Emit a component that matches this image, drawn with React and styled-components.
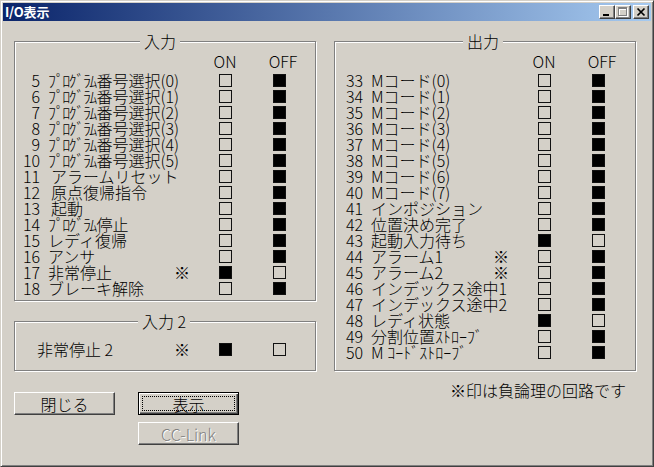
import React from 'react';
import styled, { createGlobalStyle } from 'styled-components';

const FONT = `"Noto Sans CJK JP", "Noto Sans", sans-serif`;

const Global = createGlobalStyle`
  html, body { margin: 0; padding: 0; background: #D4D0C8; }
  body { font-family: ${FONT}; }
`;

const Window = styled.div`
  width: 654px;
  height: 467px;
  box-sizing: border-box;
  background: #D4D0C8;
  border: 1px solid;
  border-color: #D4D0C8 #404040 #404040 #D4D0C8;
  box-shadow: inset 1px 1px #fff, inset -1px -1px #808080;
  padding: 2px;
  display: flex;
  flex-direction: column;
  font-family: ${FONT};
  font-size: 16px;
  font-weight: 300;
  line-height: 16px;
  color: #000;
`;

const TitleBar = styled.div`
  height: 18px;
  flex: none;
  display: flex;
  align-items: center;
  justify-content: space-between;
  background: linear-gradient(to right, #0A246A, #A6CAF0);
  padding: 0 2px 0 2px;
`;

const TitleText = styled.span`
  color: #fff;
  font-weight: bold;
  font-size: 13px;
  line-height: 18px;
  letter-spacing: -0.2px;
`;

const CapButtons = styled.div`
  display: flex;
  align-items: center;
`;

const CapButton = styled.div`
  width: 16px;
  height: 14px;
  box-sizing: border-box;
  background: #D4D0C8;
  border: 1px solid;
  border-color: #fff #404040 #404040 #fff;
  box-shadow: inset -1px -1px #808080;
  margin-left: ${p => p.$gap || 0}px;
  svg { display: block; }
`;

const Body = styled.div`
  display: grid;
  grid-template-columns: 302px 302px;
  column-gap: 18px;
  padding: 20px 0 0 11px;
`;

const Column = styled.div`
  display: flex;
  flex-direction: column;
`;

const Group = styled.div`
  position: relative;
  box-sizing: border-box;
  height: ${p => p.$h}px;
  margin-top: ${p => p.$mt || 0}px;
  border: 1px solid #808080;
  box-shadow: inset 1px 1px #fff, 1px 1px #fff;
  padding-top: ${p => p.$pt}px;
  padding-left: ${p => p.$pl || 0}px;
`;

const Legend = styled.span`
  position: absolute;
  top: -9px;
  left: 50%;
  transform: translateX(calc(-50% + ${p => p.$shift || 0}px));
  background: #D4D0C8;
  padding: 0 4px;
  line-height: 16px;
  white-space: nowrap;
`;

const Row = styled.div`
  display: grid;
  grid-template-columns: 154px 24px 18px 26px 28px 26px;
  height: 16px;
  align-items: center;
  margin-bottom: ${p => p.$mb || 0}px;
`;

const Label = styled.div`
  grid-column: 1;
  display: flex;
  white-space: pre;
  min-width: 0;
  overflow: visible;
  padding-left: ${p => p.$pl || 0}px;
`;

const Num = styled.span`
  flex: none;
  width: ${p => p.$w}px;
  text-align: right;
`;

const Text = styled.span`
  margin-left: ${p => p.$gap}px;
`;

const Narrow = styled.span`
  letter-spacing: -1.7px;
  margin-right: 1px;
`;

const Mark = styled.span`
  grid-column: 2;
  justify-self: center;
`;

const HeadText = styled.span`
  grid-column: ${p => p.$col};
  justify-self: center;
  white-space: nowrap;
  margin-left: ${p => p.$ml || 0}px;
`;

const Lamp = styled.span`
  grid-column: ${p => p.$col};
  justify-self: center;
  width: 13px;
  height: 13px;
  box-sizing: border-box;
  border: 1px solid #111;
  background: ${p => (p.$on ? '#000' : 'transparent')};
`;

const ButtonRow = styled.div`
  display: flex;
  gap: 23px;
  margin-top: 21px;
  align-items: flex-start;
`;

const ButtonStack = styled.div`
  display: flex;
  flex-direction: column;
  gap: 7px;
`;

const Button = styled.button`
  width: 101px;
  height: 23px;
  box-sizing: border-box;
  padding: 0;
  margin: 0;
  background: #D4D0C8;
  font-family: ${FONT};
  font-size: 16px;
  font-weight: 300;
  line-height: 16px;
  color: #000;
  border: 1px solid;
  border-color: #fff #404040 #404040 #fff;
  box-shadow: inset -1px -1px #808080;
  cursor: default;
`;

const DefaultButton = styled(Button)`
  border-color: #000;
  box-shadow: inset 1px 1px #fff, inset -1px -1px #404040, inset -2px -2px #808080;
  outline: 1px dotted #000;
  outline-offset: -5px;
`;

const DisabledButton = styled(Button)`
  color: #808080;
  text-shadow: 1px 1px #fff;
`;

const Note = styled.div`
  margin-top: 11px;
  padding-right: 10px;
  text-align: right;
  white-space: nowrap;
`;

const PG = 'ﾌﾟﾛｸﾞﾗﾑ';

const inputRows = [
  { n: '5', hw: PG, t: '番号選択(0)' },
  { n: '6', hw: PG, t: '番号選択(1)' },
  { n: '7', hw: PG, t: '番号選択(2)' },
  { n: '8', hw: PG, t: '番号選択(3)' },
  { n: '9', hw: PG, t: '番号選択(4)' },
  { n: '10', hw: PG, t: '番号選択(5)' },
  { n: '11', t: 'アラームリセット', extra: 3 },
  { n: '12', t: '原点復帰指令', extra: 3 },
  { n: '13', t: '起動', extra: 3 },
  { n: '14', hw: PG, t: '停止' },
  { n: '15', t: 'レディ復帰' },
  { n: '16', t: 'アンサ' },
  { n: '17', t: '非常停止', mark: true, on: true },
  { n: '18', t: 'ブレーキ解除' },
];

const outputRows = [
  { n: '33', t: 'Mコード(0)' },
  { n: '34', t: 'Mコード(1)' },
  { n: '35', t: 'Mコード(2)' },
  { n: '36', t: 'Mコード(3)' },
  { n: '37', t: 'Mコード(4)' },
  { n: '38', t: 'Mコード(5)' },
  { n: '39', t: 'Mコード(6)' },
  { n: '40', t: 'Mコード(7)' },
  { n: '41', t: 'インポジション' },
  { n: '42', t: '位置決め完了' },
  { n: '43', t: '起動入力待ち', on: true },
  { n: '44', t: 'アラーム1', mark: true },
  { n: '45', t: 'アラーム2', mark: true },
  { n: '46', t: 'インデックス途中1' },
  { n: '47', t: 'インデックス途中2' },
  { n: '48', t: 'レディ状態', on: true },
  { n: '49', t: '分割位置ｽﾄﾛｰﾌﾞ' },
  { n: '50', t: 'M ｺｰﾄﾞｽﾄﾛｰﾌﾞ' },
];

function IoRow({ row, numW, gap }) {
  return (
    <Row>
      <Label>
        <Num $w={numW}>{row.n}</Num>
        <Text $gap={gap + (row.extra || 0)}>
          {row.hw && <Narrow>{row.hw}</Narrow>}
          {row.t}
        </Text>
      </Label>
      {row.mark && <Mark>※</Mark>}
      <Lamp $col={4} $on={!!row.on} />
      <Lamp $col={6} $on={!row.on} />
    </Row>
  );
}

function Header() {
  return (
    <Row $mb={3}>
      <HeadText $col={4}>ON</HeadText>
      <HeadText $col={6} $ml={8}>OFF</HeadText>
    </Row>
  );
}

export default function App() {
  return (
    <>
      <Global />
      <Window>
        <TitleBar>
          <TitleText>I/O表示</TitleText>
          <CapButtons>
            <CapButton>
              <svg width="14" height="12" viewBox="0 0 14 12">
                <rect x="3" y="8" width="6" height="2" fill="#000" />
              </svg>
            </CapButton>
            <CapButton>
              <svg width="14" height="12" viewBox="0 0 14 12" shapeRendering="crispEdges">
                <g transform="translate(1 1)" fill="none" stroke="#fff">
                  <rect x="2.5" y="1.5" width="8" height="8" />
                  <line x1="2" y1="2.5" x2="11" y2="2.5" />
                </g>
                <g fill="none" stroke="#808080">
                  <rect x="2.5" y="1.5" width="8" height="8" />
                  <line x1="2" y1="2.5" x2="11" y2="2.5" />
                </g>
              </svg>
            </CapButton>
            <CapButton $gap={2}>
              <svg width="14" height="12" viewBox="0 0 14 12">
                <path d="M3.5 2.5 L10.5 9.5 M10.5 2.5 L3.5 9.5" stroke="#000" strokeWidth="1.7" />
              </svg>
            </CapButton>
          </CapButtons>
        </TitleBar>
        <Body>
          <Column>
            <Group $h={260} $pt={11} $pl={1}>
              <Legend $shift={-5}>入力</Legend>
              <Header />
              {inputRows.map(r => (
                <IoRow key={r.n} row={r} numW={24} gap={8} />
              ))}
            </Group>
            <Group $h={50} $mt={20} $pt={19} $pl={1}>
              <Legend $shift={-1}>入力 2</Legend>
              <Row>
                <Label $pl={21}>非常停止 2</Label>
                <Mark>※</Mark>
                <Lamp $col={4} $on />
                <Lamp $col={6} />
              </Row>
            </Group>
            <ButtonRow>
              <Button>閉じる</Button>
              <ButtonStack>
                <DefaultButton>表示</DefaultButton>
                <DisabledButton disabled>CC-Link</DisabledButton>
              </ButtonStack>
            </ButtonRow>
          </Column>
          <Column>
            <Group $h={330} $pt={11}>
              <Legend $shift={-2}>出力</Legend>
              <Header />
              {outputRows.map(r => (
                <IoRow key={r.n} row={r} numW={28} gap={8} />
              ))}
            </Group>
            <Note>※印は負論理の回路です</Note>
          </Column>
        </Body>
      </Window>
    </>
  );
}
